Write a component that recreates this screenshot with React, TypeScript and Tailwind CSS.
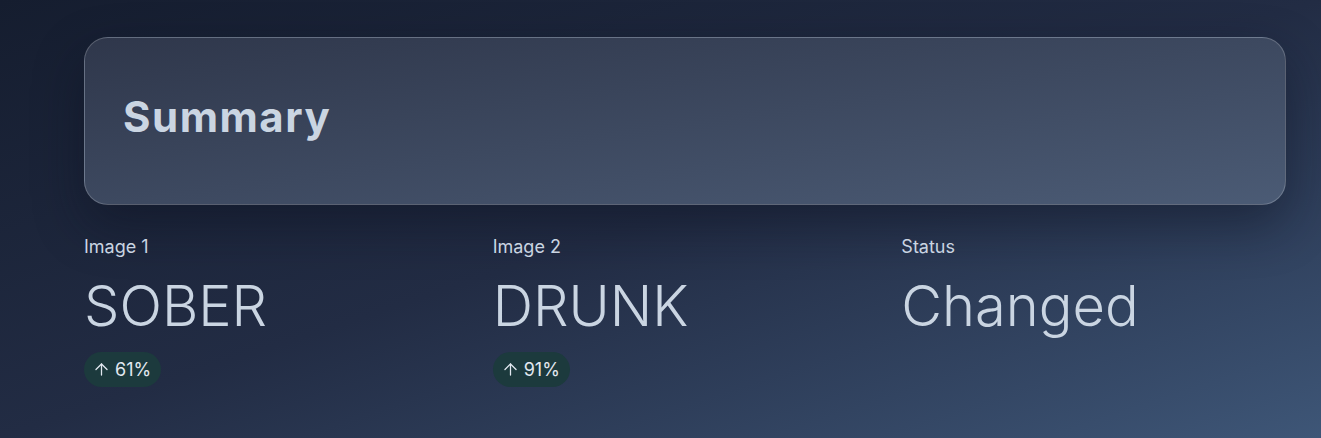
import { ArrowUp } from 'lucide-react';

export default function App() {
  const items = [
    { label: 'Image 1', value: 'SOBER', pct: '61%' },
    { label: 'Image 2', value: 'DRUNK', pct: '91%' },
    { label: 'Status', value: 'Changed', pct: null },
  ];

  return (
    <div
      className="w-[1321px] h-[438px] overflow-hidden bg-gradient-to-br from-[#151d2f] via-[#222c44] to-[#3e5677] pl-[84px] pr-[35px] pt-[37px]"
      style={{ fontFamily: 'Inter, "Noto Sans", sans-serif' }}
    >
      {/* Summary card */}
      <div className="h-[168px] flex items-center px-[38px] pb-[10px] rounded-3xl border border-white/20 bg-gradient-to-br from-[#2f374b] to-[#4b5b75] shadow-[0_20px_50px_rgba(10,15,30,0.45)]">
        <h2 className="text-[42px] font-bold text-slate-300 tracking-[1.5px]">Summary</h2>
      </div>

      {/* Stats */}
      <div className="grid grid-cols-3 gap-6 mt-[30px]">
        {items.map((item) => (
          <div key={item.label} className="flex flex-col items-start">
            <div className="text-[18px] leading-6 text-slate-300">{item.label}</div>
            <div className="mt-[15px] text-[56px] leading-[64px] font-light text-slate-300">
              {item.value}
            </div>
            {item.pct && (
              <div className="mt-[14px] h-[35px] pl-2 pr-2.5 flex items-center gap-1 rounded-full bg-[#1c3a3d] text-slate-200 text-[18px]">
                <ArrowUp className="w-[19px] h-[19px]" strokeWidth={1.6} />
                <span>{item.pct}</span>
              </div>
            )}
          </div>
        ))}
      </div>
    </div>
  );
}
